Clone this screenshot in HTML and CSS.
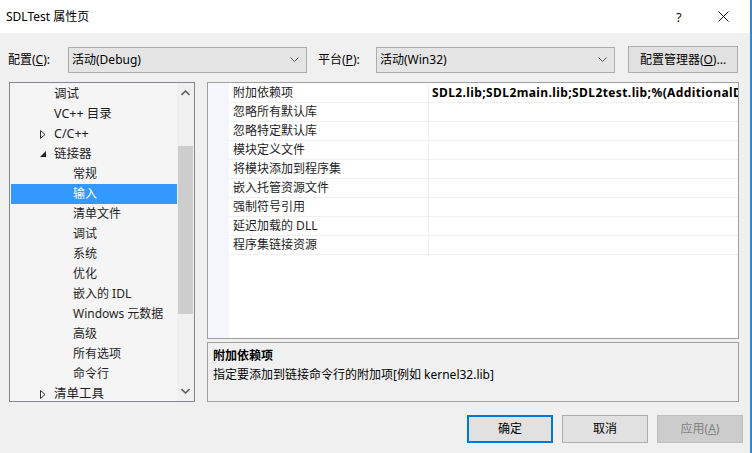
FILE: index.html
```html
<!DOCTYPE html>
<html>
<head>
<meta charset="utf-8">
<link rel="stylesheet" href="styles.css">
</head>
<body>
<div class="window">
  <div class="titlebar">
    <span class="title">SDLTest 属性页</span>
    <span class="tb-help">?</span>
    <span class="tb-close"><svg width="11" height="11" viewBox="0 0 11 11"><path d="M0.5 0.5L10.5 10.5M10.5 0.5L0.5 10.5" stroke="#111" stroke-width="1" fill="none"/></svg></span>
  </div>
  <div class="main">
    <div class="config-row">
      <span class="lbl lbl-config">配置(<u>C</u>):</span>
      <div class="combo"><span>活动(Debug)</span><svg class="chev" width="9" height="5" viewBox="0 0 9 5"><path d="M0.5 0.5L4.5 4.5L8.5 0.5" stroke="#555" fill="none"/></svg></div>
      <span class="lbl lbl-platform">平台(<u>P</u>):</span>
      <div class="combo"><span>活动(Win32)</span><svg class="chev" width="9" height="5" viewBox="0 0 9 5"><path d="M0.5 0.5L4.5 4.5L8.5 0.5" stroke="#555" fill="none"/></svg></div>
      <div class="btn btn-mgr">配置管理器(<u>O</u>)...</div>
    </div>
    <div class="content">
      <div class="tree">
        <div class="tree-items">
          <div class="ti l1">调试</div>
          <div class="ti l1">VC++ 目录</div>
          <div class="ti l1"><svg class="arr" width="6" height="9" viewBox="0 0 6 9"><path d="M0.5 0.5L5 4.5L0.5 8.5Z" stroke="#333" fill="none"/></svg>C/C++</div>
          <div class="ti l1"><svg class="arr" width="6" height="9" viewBox="0 0 6 9"><path d="M0 7L6 7L6 1Z" fill="#222"/></svg>链接器</div>
          <div class="ti l2">常规</div>
          <div class="ti l2 sel">输入</div>
          <div class="ti l2">清单文件</div>
          <div class="ti l2">调试</div>
          <div class="ti l2">系统</div>
          <div class="ti l2">优化</div>
          <div class="ti l2">嵌入的 IDL</div>
          <div class="ti l2">Windows 元数据</div>
          <div class="ti l2">高级</div>
          <div class="ti l2">所有选项</div>
          <div class="ti l2">命令行</div>
          <div class="ti l1"><svg class="arr" width="6" height="9" viewBox="0 0 6 9"><path d="M0.5 0.5L5 4.5L0.5 8.5Z" stroke="#333" fill="none"/></svg>清单工具</div>
        </div>
        <div class="vscroll">
          <div class="sb-btn"><svg width="9" height="6" viewBox="0 0 9 6"><path d="M0.5 5L4.5 1L8.5 5" stroke="#606060" stroke-width="1.6" fill="none"/></svg></div>
          <div class="sb-track"><div class="sb-thumb"></div></div>
          <div class="sb-btn"><svg width="9" height="6" viewBox="0 0 9 6"><path d="M0.5 1L4.5 5L8.5 1" stroke="#606060" stroke-width="1.6" fill="none"/></svg></div>
        </div>
      </div>
      <div class="right">
        <div class="grid">
          <div class="gutter"></div>
          <div class="rows">
            <div class="row"><div class="name">附加依赖项</div><div class="val">SDL2.lib;SDL2main.lib;SDL2test.lib;%(AdditionalD</div></div>
            <div class="row"><div class="name">忽略所有默认库</div><div class="val"></div></div>
            <div class="row"><div class="name">忽略特定默认库</div><div class="val"></div></div>
            <div class="row"><div class="name">模块定义文件</div><div class="val"></div></div>
            <div class="row"><div class="name">将模块添加到程序集</div><div class="val"></div></div>
            <div class="row"><div class="name">嵌入托管资源文件</div><div class="val"></div></div>
            <div class="row"><div class="name">强制符号引用</div><div class="val"></div></div>
            <div class="row"><div class="name">延迟加载的 DLL</div><div class="val"></div></div>
            <div class="row"><div class="name">程序集链接资源</div><div class="val"></div></div>
          </div>
        </div>
        <div class="desc">
          <div class="desc-title">附加依赖项</div>
          <div class="desc-text">指定要添加到链接命令行的附加项[例如 kernel32.lib]</div>
        </div>
      </div>
    </div>
    <div class="buttons">
      <div class="btn btn-ok">确定</div>
      <div class="btn">取消</div>
      <div class="btn btn-dis">应用(<u>A</u>)</div>
    </div>
  </div>
</div>
</body>
</html>
```
FILE: styles.css
```css
* { box-sizing: border-box; }
html, body { margin: 0; padding: 0; }
body {
  width: 752px;
  height: 453px;
  overflow: hidden;
  font-family: "Noto Sans", "Noto Sans CJK SC", sans-serif;
  font-size: 12px;
  color: #000;
  background: #fff;
}
u { text-decoration: underline; text-underline-offset: 1px; }
.window {
  width: 752px;
  height: 453px;
  border-right: 2px solid #2b8ae0;
  display: flex;
  flex-direction: column;
}
.titlebar {
  height: 33px;
  background: #fff;
  display: flex;
  align-items: center;
  padding-left: 6px;
  line-height: 16px;
}
.title { flex: 1; font-size: 12px; color: #000; }
.tb-help { width: 12px; margin-right: 30px; font-size: 13px; color: #111; }
.tb-close { width: 11px; height: 11px; margin-right: 21px; display: flex; }
.main {
  flex: 1;
  background: #f0f0f0;
  display: flex;
  flex-direction: column;
}
.config-row {
  display: flex;
  align-items: center;
  padding-top: 13px;
  height: 40px;
  padding-left: 8px;
}
.lbl { line-height: 16px; }
.lbl-config { width: 60px; }
.lbl-platform { width: 58px; margin-left: 11px; }
.combo {
  width: 239px;
  height: 26px;
  background: #e5e5e5;
  border: 1px solid #acacac;
  display: flex;
  align-items: center;
  padding-left: 3px;
  padding-right: 7px;
  line-height: 16px;
}
.combo span { flex: 1; }
.btn {
  width: 86px;
  height: 28px;
  background: #e1e1e1;
  border: 1px solid #adadad;
  display: flex;
  align-items: center;
  justify-content: center;
  line-height: 16px;
}
.btn-mgr { width: 110px; height: 27px; margin-left: 13px; }
.content {
  display: flex;
  padding-left: 9px;
  margin-top: 9px;
  height: 320px;
}
.tree {
  width: 186px;
  height: 320px;
  border: 1px solid #828790;
  background: #f5f5f5;
  display: flex;
  overflow: hidden;
}
.tree-items {
  flex: 1;
  padding-top: 1px;
  padding-left: 1px;
  overflow: hidden;
}
.ti {
  height: 20px;
  line-height: 20px;
  white-space: nowrap;
  display: flex;
  align-items: center;
  color: #1e1e1e;
}
.ti.l1 { padding-left: 43px; font-size: 12.5px; }
.ti.l2 { padding-left: 62px; }
.ti .arr { margin-left: -14px; margin-right: 8px; }
.ti.sel { background: #3399ff; color: #fff; }
.vscroll {
  width: 17px;
  background: #f0f0f0;
  display: flex;
  flex-direction: column;
}
.sb-btn { height: 20px; display: flex; align-items: center; justify-content: center; }
.sb-track { flex: 1; padding: 43px 1px 0 1px; }
.sb-thumb { height: 168px; background: #cdcdcd; }
.right {
  margin-left: 12px;
  width: 532px;
  display: flex;
  flex-direction: column;
}
.grid {
  height: 257px;
  border: 1px solid #a0a0a0;
  background: #fff;
  display: flex;
  overflow: hidden;
}
.gutter { width: 21px; background: #f4f6fb; }
.rows { flex: 1; overflow: hidden; padding-top: 1px; }
.row {
  display: flex;
  height: 19px;
  border-bottom: 1px solid #f0f0f0;
  line-height: 18px;
}
.name {
  width: 200px;
  padding-left: 4px;
  border-right: 1px solid #f0f0f0;
  color: #1e1e1e;
  white-space: nowrap;
}
.val {
  flex: 1;
  padding-left: 3px;
  font-weight: bold;
  letter-spacing: 0.4px;
  white-space: nowrap;
  overflow: hidden;
}
.desc {
  margin-top: 3px;
  height: 60px;
  border: 1px solid #a0a0a0;
  background: #f0f0f0;
  padding: 3px 0 0 5px;
  line-height: 19px;
}
.desc-title { font-weight: bold; }
.buttons {
  display: flex;
  justify-content: flex-end;
  padding-right: 7px;
  margin-top: 13px;
  gap: 9px;
}
.btn-ok { border: 2px solid #0078d7; }
.btn-dis { background: #cccccc; border-color: #bfbfbf; color: #838383; }
```
